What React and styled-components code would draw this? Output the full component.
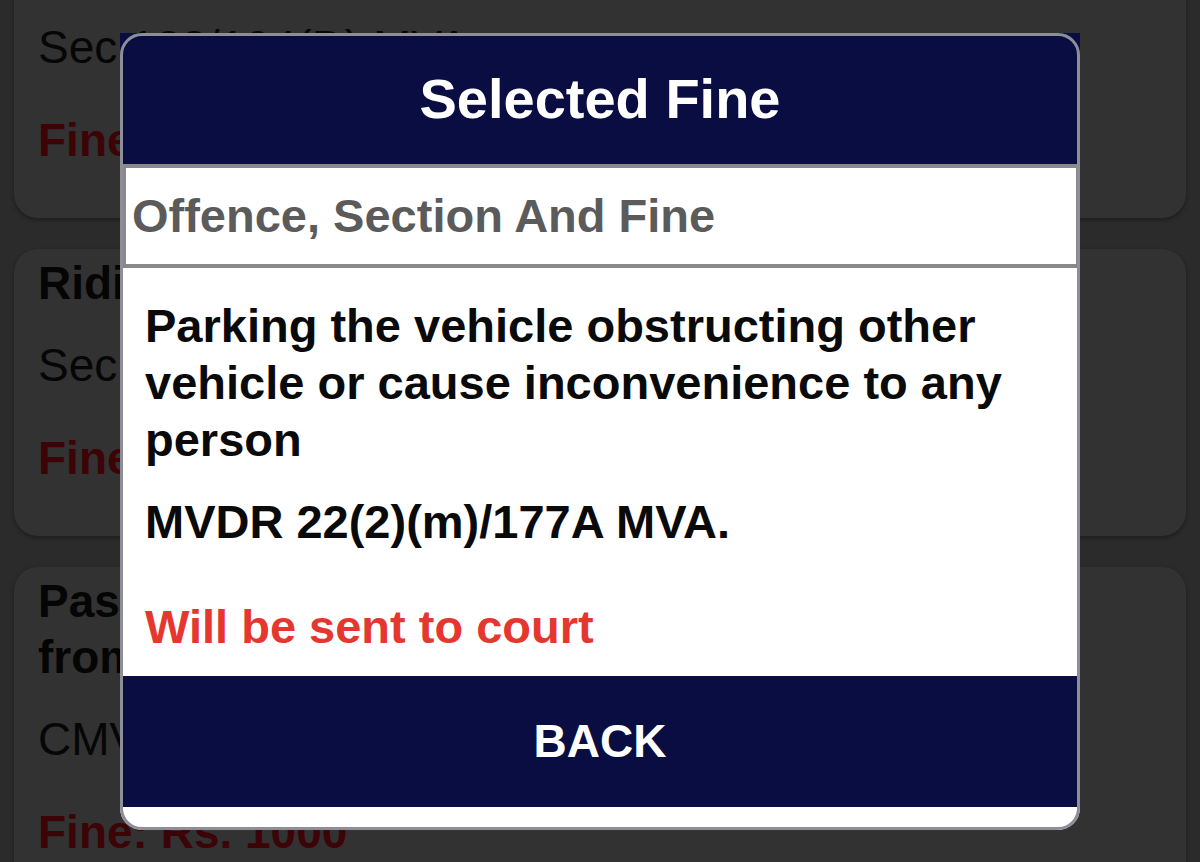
import styled, { createGlobalStyle } from "styled-components";

const GlobalStyle = createGlobalStyle`
  html, body {
    margin: 0;
    padding: 0;
    background: #2b2b2b;
    overflow: hidden;
  }
  body {
    font-family: "Liberation Sans", Arial, Helvetica, sans-serif;
  }
`;

const Page = styled.div`
  height: 862px;
  overflow: hidden;
`;

const List = styled.div`
  display: flex;
  flex-direction: column;
  gap: 31px;
  margin-top: -69px;
  padding: 0 14px;
`;

const Card = styled.div`
  background: #323232;
  border-radius: 24px;
  padding: 6px 24px 50px;
  box-shadow: 0 2px 4px rgba(0, 0, 0, 0.35);
  font-size: 46px;
  line-height: 56px;
`;

const CardTitle = styled.div`
  font-weight: bold;
  color: #050505;
`;

const CardLine = styled.div`
  margin-top: 26px;
  color: #060606;
`;

const CardFine = styled.div`
  margin-top: 37px;
  color: #3c0406;
  font-weight: bold;
`;

const Backdrop = styled.div`
  position: fixed;
  inset: 0;
  display: flex;
  align-items: center;
  justify-content: center;
`;

const Modal = styled.div`
  position: relative;
  width: 960px;
  background: #ffffff;
  border-radius: 22px;
  display: flex;
  flex-direction: column;

  &::after {
    content: "";
    position: absolute;
    inset: 0;
    border: 3px solid #8d8e98;
    border-radius: 22px;
    pointer-events: none;
  }
`;

const Header = styled.div`
  height: 131px;
  background: #090d42;
  color: #ffffff;
  font-size: 56px;
  font-weight: bold;
  display: flex;
  align-items: center;
  justify-content: center;
`;

const SectionBar = styled.div`
  height: 104px;
  box-sizing: border-box;
  margin-left: 2px;
  border: 4px solid #8a8a8a;
  padding: 0 6px;
  display: flex;
  align-items: center;
  color: #5b5b5b;
  font-size: 47px;
  font-weight: bold;
`;

const Body = styled.div`
  padding: 29px 25px 0;
  font-size: 47px;
  line-height: 57px;
  font-weight: bold;
  color: #0a0a0a;
`;

const Offence = styled.div``;

const Section = styled.div`
  margin-top: 25px;
`;

const Court = styled.div`
  margin-top: 48px;
  color: #e5372f;
`;

const BackButton = styled.button`
  margin: 21px 3px 23px;
  height: 131px;
  border: none;
  background: #090d42;
  color: #ffffff;
  font-family: inherit;
  font-size: 46px;
  font-weight: bold;
  cursor: pointer;
`;

export default function App() {
  return (
    <Page>
      <GlobalStyle />
      <List>
        <Card>
          <CardTitle>Using mobile phone while driving</CardTitle>
          <CardLine>Sec 188/194(D) MVA</CardLine>
          <CardFine>Fine: Rs. 1000</CardFine>
        </Card>
        <Card>
          <CardTitle>Riding without helmet</CardTitle>
          <CardLine>Sec 129/177 MVA</CardLine>
          <CardFine>Fine: Rs. 100</CardFine>
        </Card>
        <Card>
          <CardTitle>
            Passenger sitting beside driver
            <br />
            from the left side
          </CardTitle>
          <CardLine>CMVR 125/177 MVA</CardLine>
          <CardFine>Fine: Rs. 1000</CardFine>
        </Card>
      </List>

      <Backdrop>
        <Modal>
          <Header>Selected Fine</Header>
          <SectionBar>Offence, Section And Fine</SectionBar>
          <Body>
            <Offence>
              Parking the vehicle obstructing other vehicle or cause
              inconvenience to any person
            </Offence>
            <Section>MVDR 22(2)(m)/177A MVA.</Section>
            <Court>Will be sent to court</Court>
          </Body>
          <BackButton>BACK</BackButton>
        </Modal>
      </Backdrop>
    </Page>
  );
}
